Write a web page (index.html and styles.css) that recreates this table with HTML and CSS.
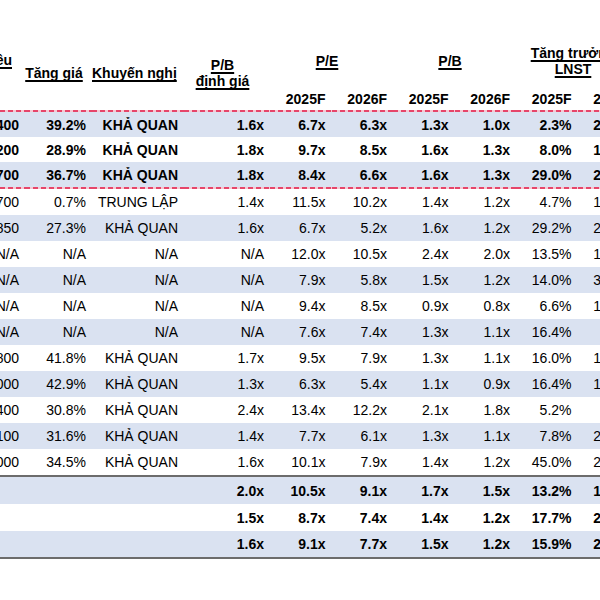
FILE: index.html
```html
<!DOCTYPE html>
<html lang="vi">
<head>
<meta charset="utf-8">
<title>Định giá</title>
<link rel="stylesheet" href="styles.css">
</head>
<body>
<div class="sheet">
<table class="valuation">
  <colgroup>
    <col class="w-target"><col class="w-upside"><col class="w-rec"><col class="w-pbv">
    <col class="w-num"><col class="w-num"><col class="w-num"><col class="w-num"><col class="w-num"><col class="w-num">
  </colgroup>
  <thead>
    <tr class="head-a">
      <th rowspan="2" class="th-target"><span class="u">Giá mục tiêu</span></th>
      <th rowspan="2"><span class="u">Tăng giá</span></th>
      <th rowspan="2"><span class="u">Khuyến nghị</span></th>
      <th rowspan="2"><span class="u">P/B</span><br><span class="u">định giá</span></th>
      <th colspan="2"><span class="u">P/E</span></th>
      <th colspan="2"><span class="u">P/B</span></th>
      <th colspan="2"><span class="u">Tăng trưởng</span><br><span class="u">LNST</span></th>
    </tr>
    <tr class="head-b">
      <th>2025F</th><th>2026F</th><th>2025F</th><th>2026F</th><th>2025F</th><th>2026F</th>
    </tr>
  </thead>
  <tbody>
    <tr class="blue bold tight dash-top">
      <td>32,400</td><td>39.2%</td><td>KHẢ QUAN</td><td>1.6x</td><td>6.7x</td><td>6.3x</td><td>1.3x</td><td>1.0x</td><td>2.3%</td><td>21.5%</td>
    </tr>
    <tr class="bold tight">
      <td>45,200</td><td>28.9%</td><td>KHẢ QUAN</td><td>1.8x</td><td>9.7x</td><td>8.5x</td><td>1.6x</td><td>1.3x</td><td>8.0%</td><td>17.6%</td>
    </tr>
    <tr class="blue bold tight dash-bottom">
      <td>26,700</td><td>36.7%</td><td>KHẢ QUAN</td><td>1.8x</td><td>8.4x</td><td>6.6x</td><td>1.6x</td><td>1.3x</td><td>29.0%</td><td>25.3%</td>
    </tr>
    <tr>
      <td>35,700</td><td>0.7%</td><td>TRUNG LẬP</td><td>1.4x</td><td>11.5x</td><td>10.2x</td><td>1.4x</td><td>1.2x</td><td>4.7%</td><td>13.8%</td>
    </tr>
    <tr class="blue">
      <td>24,850</td><td>27.3%</td><td>KHẢ QUAN</td><td>1.6x</td><td>6.7x</td><td>5.2x</td><td>1.6x</td><td>1.2x</td><td>29.2%</td><td>20.9%</td>
    </tr>
    <tr>
      <td>N/A</td><td>N/A</td><td>N/A</td><td>N/A</td><td>12.0x</td><td>10.5x</td><td>2.4x</td><td>2.0x</td><td>13.5%</td><td>16.2%</td>
    </tr>
    <tr class="blue">
      <td>N/A</td><td>N/A</td><td>N/A</td><td>N/A</td><td>7.9x</td><td>5.8x</td><td>1.5x</td><td>1.2x</td><td>14.0%</td><td>31.4%</td>
    </tr>
    <tr>
      <td>N/A</td><td>N/A</td><td>N/A</td><td>N/A</td><td>9.4x</td><td>8.5x</td><td>0.9x</td><td>0.8x</td><td>6.6%</td><td>12.0%</td>
    </tr>
    <tr class="blue">
      <td>N/A</td><td>N/A</td><td>N/A</td><td>N/A</td><td>7.6x</td><td>7.4x</td><td>1.3x</td><td>1.1x</td><td>16.4%</td><td>9.8%</td>
    </tr>
    <tr>
      <td>38,800</td><td>41.8%</td><td>KHẢ QUAN</td><td>1.7x</td><td>9.5x</td><td>7.9x</td><td>1.3x</td><td>1.1x</td><td>16.0%</td><td>18.5%</td>
    </tr>
    <tr class="blue">
      <td>40,000</td><td>42.9%</td><td>KHẢ QUAN</td><td>1.3x</td><td>6.3x</td><td>5.4x</td><td>1.1x</td><td>0.9x</td><td>16.4%</td><td>15.9%</td>
    </tr>
    <tr>
      <td>31,400</td><td>30.8%</td><td>KHẢ QUAN</td><td>2.4x</td><td>13.4x</td><td>12.2x</td><td>2.1x</td><td>1.8x</td><td>5.2%</td><td>8.7%</td>
    </tr>
    <tr class="blue">
      <td>25,100</td><td>31.6%</td><td>KHẢ QUAN</td><td>1.4x</td><td>7.7x</td><td>6.1x</td><td>1.3x</td><td>1.1x</td><td>7.8%</td><td>22.4%</td>
    </tr>
    <tr class="rule">
      <td>33,000</td><td>34.5%</td><td>KHẢ QUAN</td><td>1.6x</td><td>10.1x</td><td>7.9x</td><td>1.4x</td><td>1.2x</td><td>45.0%</td><td>27.8%</td>
    </tr>
  </tbody>
  <tbody class="summary">
    <tr class="blue bold tall">
      <td></td><td></td><td></td><td>2.0x</td><td>10.5x</td><td>9.1x</td><td>1.7x</td><td>1.5x</td><td>13.2%</td><td>16.1%</td>
    </tr>
    <tr class="bold tall">
      <td></td><td></td><td></td><td>1.5x</td><td>8.7x</td><td>7.4x</td><td>1.4x</td><td>1.2x</td><td>17.7%</td><td>20.4%</td>
    </tr>
    <tr class="blue bold rule">
      <td></td><td></td><td></td><td>1.6x</td><td>9.1x</td><td>7.7x</td><td>1.5x</td><td>1.2x</td><td>15.9%</td><td>20.6%</td>
    </tr>
  </tbody>
</table>
</div>
</body>
</html>
```

FILE: styles.css
```css
html, body {
  margin: 0;
  padding: 0;
  background: #ffffff;
}

body {
  font-family: "Liberation Sans", Arial, sans-serif;
  font-size: 14px;
  color: #000000;
}

.sheet {
  width: 600px;
  height: 600px;
  overflow: hidden;
  padding-top: 36px;
  box-sizing: border-box;
}

.valuation {
  margin-left: -80px;
  width: 718px;
  table-layout: fixed;
  border-collapse: separate;
  border-spacing: 0;
}

.w-target { width: 105px; }
.w-upside { width: 67px; }
.w-rec { width: 92px; }
.w-pbv { width: 86px; }
.w-num { width: 61.5px; }

th {
  font-weight: bold;
  line-height: 16px;
  padding: 0 9px 0 0;
  text-align: center;
  vertical-align: middle;
  white-space: nowrap;
}

.u {
  text-decoration: underline;
  text-decoration-skip-ink: none;
  text-underline-offset: 2px;
  text-decoration-thickness: 1.5px;
}

.head-a th {
  height: 49px;
}

.head-a .th-target {
  text-align: right;
  padding-right: 13px;
  padding-top: 16px;
  vertical-align: top;
}

.head-b th {
  height: 22px;
  text-align: right;
  padding: 0 6px 3px 0;
  vertical-align: bottom;
}

td {
  line-height: 16px;
  padding: 5px 6px 5px 0;
  text-align: right;
  vertical-align: top;
  white-space: nowrap;
}

tr.blue td {
  background-color: #dae2f1;
}

tr.bold td {
  font-weight: bold;
}

tr.tight td {
  padding-bottom: 4px;
}

tr.tall td {
  padding-top: 6px;
}

tr.dash-top td {
  padding-top: 7px;
  background-image: repeating-linear-gradient(90deg, #e6456a 0 5px, #f6c9d3 5px 8px);
  background-repeat: no-repeat;
  background-size: 100% 2px;
  background-position: left top;
}

tr.dash-bottom td {
  padding-bottom: 6px;
  background-image: repeating-linear-gradient(90deg, #e6456a 0 5px, #f6c9d3 5px 8px);
  background-repeat: no-repeat;
  background-size: 100% 2px;
  background-position: left bottom;
}

tr.rule td {
  border-bottom: 2px solid #6c6c6c;
}
```
